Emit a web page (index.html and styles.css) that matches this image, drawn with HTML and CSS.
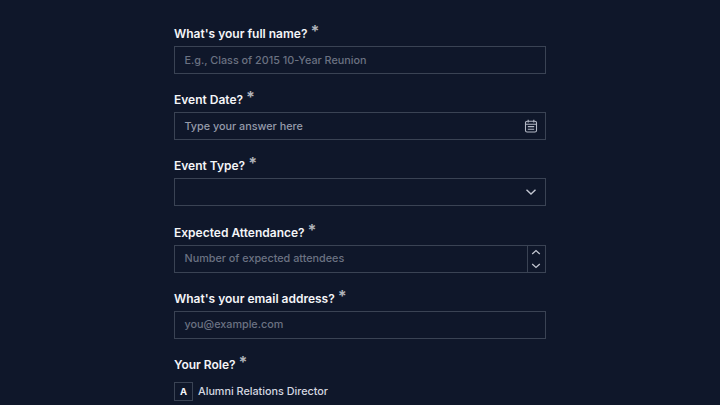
FILE: index.html
```html
<!DOCTYPE html>
<html lang="en">
<head>
    <meta charset="UTF-8">
    <title>Event Form</title>
    <link rel="stylesheet" href="styles.css">
</head>
<body>
    <form class="form">
        <div class="field">
            <label class="label">What's your full name? <span class="star">*</span></label>
            <div class="input"><span class="placeholder">E.g., Class of 2015 10-Year Reunion</span></div>
        </div>
        <div class="field">
            <label class="label">Event Date? <span class="star">*</span></label>
            <div class="input">
                <span class="placeholder light">Type your answer here</span>
                <svg class="icon-date" width="14" height="14" viewBox="0 0 14 14" fill="none" stroke="#b4b9c6" stroke-width="1.1">
                    <rect x="1.5" y="2.2" width="11" height="10.8" rx="1.6"/>
                    <path d="M4.2 0.8v2.6M9.8 0.8v2.6M1.5 5.2h11M3.8 7.6h6.4M3.8 10.2h6.4"/>
                </svg>
            </div>
        </div>
        <div class="field">
            <label class="label">Event Type? <span class="star">*</span></label>
            <div class="input">
                <svg class="icon-chevron" width="12" height="8" viewBox="0 0 12 8" fill="none" stroke="#c3c7d2" stroke-width="1.4">
                    <path d="M1.5 1.8L6 6l4.5-4.2"/>
                </svg>
            </div>
        </div>
        <div class="field">
            <label class="label">Expected Attendance? <span class="star">*</span></label>
            <div class="input stepper-input">
                <span class="placeholder">Number of expected attendees</span>
                <div class="stepper">
                    <svg width="10" height="7" viewBox="0 0 10 7" fill="none" stroke="#c3c7d2" stroke-width="1.3"><path d="M1.2 5L5 1.6 8.8 5"/></svg>
                    <svg width="10" height="7" viewBox="0 0 10 7" fill="none" stroke="#c3c7d2" stroke-width="1.3"><path d="M1.2 2L5 5.4 8.8 2"/></svg>
                </div>
            </div>
        </div>
        <div class="field">
            <label class="label">What's your email address? <span class="star">*</span></label>
            <div class="input"><span class="placeholder">you@example.com</span></div>
        </div>
        <div class="field">
            <label class="label">Your Role? <span class="star">*</span></label>
            <div class="option">
                <span class="option-key">A</span>
                <span class="option-text">Alumni Relations Director</span>
            </div>
        </div>
    </form>
</body>
</html>
```

FILE: styles.css
```css
* {
    margin: 0;
    padding: 0;
    box-sizing: border-box;
}

html, body {
    height: 405px;
    overflow: hidden;
}

body {
    background: #0f172a;
    font-family: 'Inter', 'Liberation Sans', sans-serif;
}

.form {
    width: 371.5px;
    margin-left: 174px;
    padding-top: 24px;
    display: flex;
    flex-direction: column;
    gap: 16.2px;
}

.field {
    display: flex;
    flex-direction: column;
    gap: 4px;
}

.label {
    display: block;
    height: 18px;
    line-height: 20px;
    color: #f4f5f8;
    font-size: 12px;
    font-weight: 600;
    white-space: nowrap;
}

.star {
    position: relative;
    top: -1px;
    color: #b0b3ba;
    font-size: 16px;
    font-weight: 700;
    line-height: 0;
}

.input {
    height: 28px;
    border: 1px solid #3a4354;
    display: flex;
    align-items: center;
    justify-content: space-between;
    padding: 0 7px 0 9.5px;
}

.placeholder {
    color: #6b7282;
    font-size: 10.8px;
    font-weight: 500;
    white-space: nowrap;
}

.placeholder.light {
    color: #959baa;
}

.icon-chevron {
    margin-left: auto;
    margin-right: 1px;
}

.stepper-input {
    padding-right: 0;
}

.stepper {
    width: 18px;
    height: 100%;
    border-left: 1px solid #3a4354;
    display: flex;
    flex-direction: column;
    align-items: center;
    justify-content: space-around;
}

.option {
    display: flex;
    align-items: center;
    gap: 5px;
    margin-top: 5px;
}

.option-key {
    width: 19px;
    height: 19px;
    border: 1px solid #3a4354;
    color: #f4f5f8;
    font-size: 9.5px;
    font-weight: 700;
    display: flex;
    align-items: center;
    justify-content: center;
}

.option-text {
    color: #d5d8e0;
    font-size: 10.8px;
    font-weight: 500;
}
```
